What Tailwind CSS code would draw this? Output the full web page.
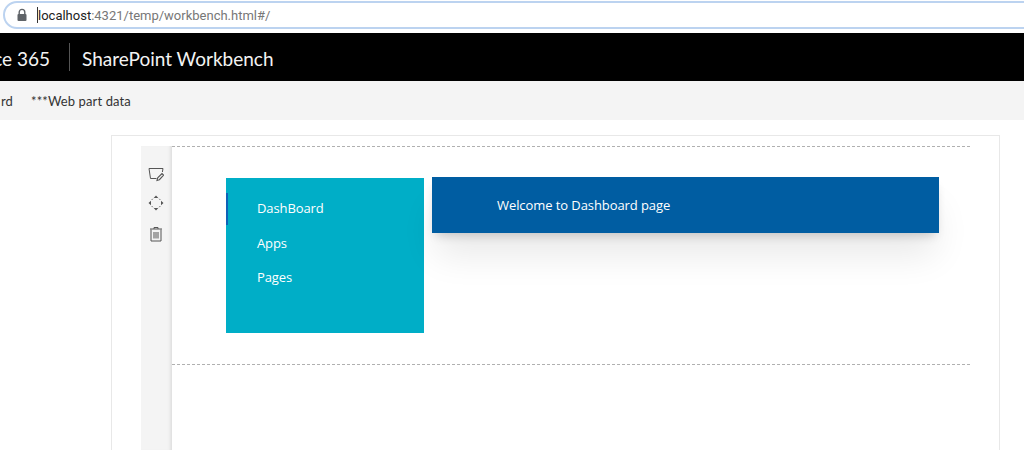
<!DOCTYPE html>
<html lang="en">
<head>
  <meta charset="UTF-8">
  <title>SharePoint Workbench</title>
  <script src="https://cdn.jsdelivr.net/npm/@tailwindcss/browser@4"></script>
</head>
<body class="w-[1024px] h-[450px] overflow-hidden bg-white font-['Open_Sans',sans-serif]">
  <!-- Address bar -->
  <div class="h-[33px] bg-white pt-px pl-[3px] overflow-hidden">
    <div class="w-[1100px] h-[28px] rounded-full border-2 border-[#bcd3f0] flex items-center pl-[11px]">
      <svg class="w-[12px] h-[14px] text-[#5f6368]" viewBox="0 0 12 14" fill="none">
        <path d="M3.2 6V4.200a2.800 2.800 0 0 1 5.600 0V6" stroke="currentColor" stroke-width="1.400"/>
        <rect x="1.500" y="6" width="9" height="7" rx="1" fill="currentColor"/>
      </svg>
      <div class="w-px h-[16px] bg-[#333] ml-[9px]"></div>
      <div class="text-[13px] leading-none text-[#777] font-['Roboto',sans-serif] mt-px"><span class="text-[#222]">localhost</span>:4321/temp/workbench.html#/</div>
    </div>
  </div>

  <!-- Suite bar -->
  <div class="h-[48px] bg-black flex items-center text-[#f3f3f3] text-[19px] font-['Lato',sans-serif] overflow-hidden">
    <div class="ml-[-46px] whitespace-nowrap pr-[19px] border-r border-[#555] h-[28px] leading-[32px] w-[116px] text-right">Office 365</div>
    <div class="ml-[12px] mt-[3px] whitespace-nowrap leading-[30px]">SharePoint Workbench</div>
  </div>

  <!-- Command bar -->
  <div class="h-[39px] bg-[#f4f4f4] flex items-center pt-[2px] text-[13px] text-[#333] tracking-[0.12px] font-['Lato',sans-serif] overflow-hidden">
    <div class="ml-[-3px] w-[16px] text-right">rd</div>
    <div class="ml-[18px]">***Web part data</div>
  </div>

  <!-- Canvas -->
  <div class="ml-[111px] mt-[15px] w-[889px] h-[320px] border border-[#e8e8e8] border-b-0 flex pl-[29px] pt-[10px]">
    <div class="w-[31px] h-[304px] bg-[#f4f4f4] border-r border-[#e2e2e2] shadow-[inset_-3px_0_3px_-2px_#e0e0e0] flex flex-col items-center pt-[20px] gap-[13px] shrink-0 text-[#555]">
      <svg class="w-[16px] h-[16px]" viewBox="0 0 16 16" fill="none" stroke="currentColor" stroke-width="1">
        <path d="M8.500 12.500H2.500L1 2.500h14l-.6 3.500"/>
        <path d="M9 14.500l.7-2.600 4.300-4.400 1.600 1.600-4.200 4.600z" stroke-width="1.100"/>
      </svg>
      <svg class="w-[16px] h-[16px]" viewBox="0 0 16 16" fill="currentColor">
        <path d="M8 .500 10.300 3H5.700zM8 15.500 5.700 13h4.600zM.500 8 3 5.700v4.600zM15.500 8 13 10.300V5.700z"/>
        <path d="M4.800 3.800 3.800 4.800M11.200 3.800l1 1M4.800 12.200l-1-1M11.200 12.200l1-1" stroke="currentColor" stroke-width="1" fill="none"/>
      </svg>
      <svg class="w-[16px] h-[16px] mt-[2px]" viewBox="0 0 16 16" fill="none" stroke="currentColor" stroke-width="1">
        <path d="M3 3.500V15h10V3.500M2 3h12M6 3V1.500h4V3M6 6v6.500M8 6v6.500M10 6v6.500"/>
      </svg>
    </div>
    <div class="flex-1 min-w-0">
      <div class="w-[798px] h-[219px] border-y border-dashed border-[#b0b0b0] pt-[31px] pl-[54px] flex items-start">
        <div class="w-[198px] h-[155px] bg-[#00aec7] pt-[15px] flex flex-col text-white text-[13px] tracking-[-0.1px] shrink-0">
          <div class="h-[32px] border-l-2 border-[#0f62b8] pl-[29px] flex items-center">DashBoard</div>
          <div class="h-[34px] mt-[2px] pl-[31px] flex items-center">Apps</div>
          <div class="h-[34px] pl-[31px] flex items-center">Pages</div>
        </div>
        <div class="ml-[8px] mt-[-1px] w-[507px] h-[56px] bg-[#005da2] shadow-[0_6px_10px_-4px_rgba(0,0,0,0.2),0_26px_36px_-4px_rgba(0,0,0,0.09)] flex items-center pl-[65px] pt-[2px] text-white text-[13px] tracking-[-0.08px] shrink-0">Welcome to Dashboard page</div>
      </div>
    </div>
  </div>
</body>
</html>
